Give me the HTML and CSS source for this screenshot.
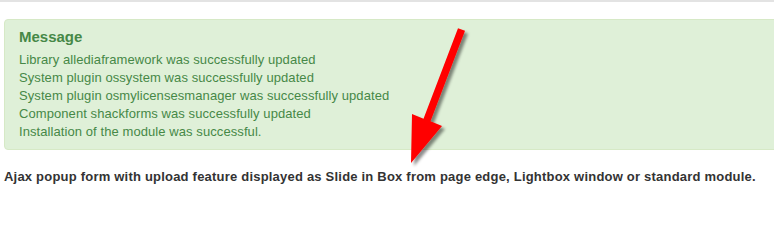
FILE: index.html
```html
<!DOCTYPE html>
<html>
<head>
<meta charset="utf-8">
<link rel="stylesheet" href="styles.css">
</head>
<body>
<div class="topline"></div>
<div class="page">
  <div class="alert">
    <h4 class="alert-heading">Message</h4>
    <div class="alert-line">Library allediaframework was successfully updated</div>
    <div class="alert-line">System plugin ossystem was successfully updated</div>
    <div class="alert-line">System plugin osmylicensesmanager was successfully updated</div>
    <div class="alert-line">Component shackforms was successfully updated</div>
    <div class="alert-line">Installation of the module was successful.</div>
  </div>
  <p class="desc">Ajax popup form with upload feature displayed as Slide in Box from page edge, Lightbox window or standard module.</p>
</div>
<svg class="arrow" width="774" height="212" viewBox="0 0 774 212">
  <defs>
    <filter id="sh" x="-30%" y="-30%" width="160%" height="160%">
      <feDropShadow dx="3" dy="3" stdDeviation="1.6" flood-color="#000" flood-opacity="0.45"/>
    </filter>
  </defs>
  <polygon filter="url(#sh)" fill="#ff0000" points="458,28.2 465,30.8 430.5,121.3 442,126 411,163 412,114 423.5,118.7"/>
</svg>
</body>
</html>
```
FILE: styles.css
```css
html, body {
  margin: 0;
  padding: 0;
  background: #ffffff;
  overflow: hidden;
}
body {
  font-family: "Liberation Sans", Arial, sans-serif;
  position: relative;
  width: 774px;
  height: 212px;
}
.topline {
  height: 2px;
  background: #e3e3e3;
}
.page {
  padding: 17px 0 0 4px;
  overflow: hidden;
}
.alert {
  margin-right: -40px;
  background: #dff0d8;
  border: 1px solid #d6e9c6;
  border-radius: 4px;
  padding: 8px 35px 8px 14px;
  color: #468847;
  font-size: 13px;
  line-height: 18px;
  letter-spacing: 0.08px;
}
.alert-heading {
  margin: 0 0 6px 0;
  font-size: 15px;
  line-height: 17px;
  font-weight: bold;
  letter-spacing: 0;
  color: #468847;
}
.desc {
  margin: 18px 0 0 0;
  font-size: 13px;
  line-height: 18px;
  font-weight: bold;
  letter-spacing: 0.21px;
  color: #333333;
}
.arrow {
  position: absolute;
  left: 0;
  top: 0;
  pointer-events: none;
}
```
